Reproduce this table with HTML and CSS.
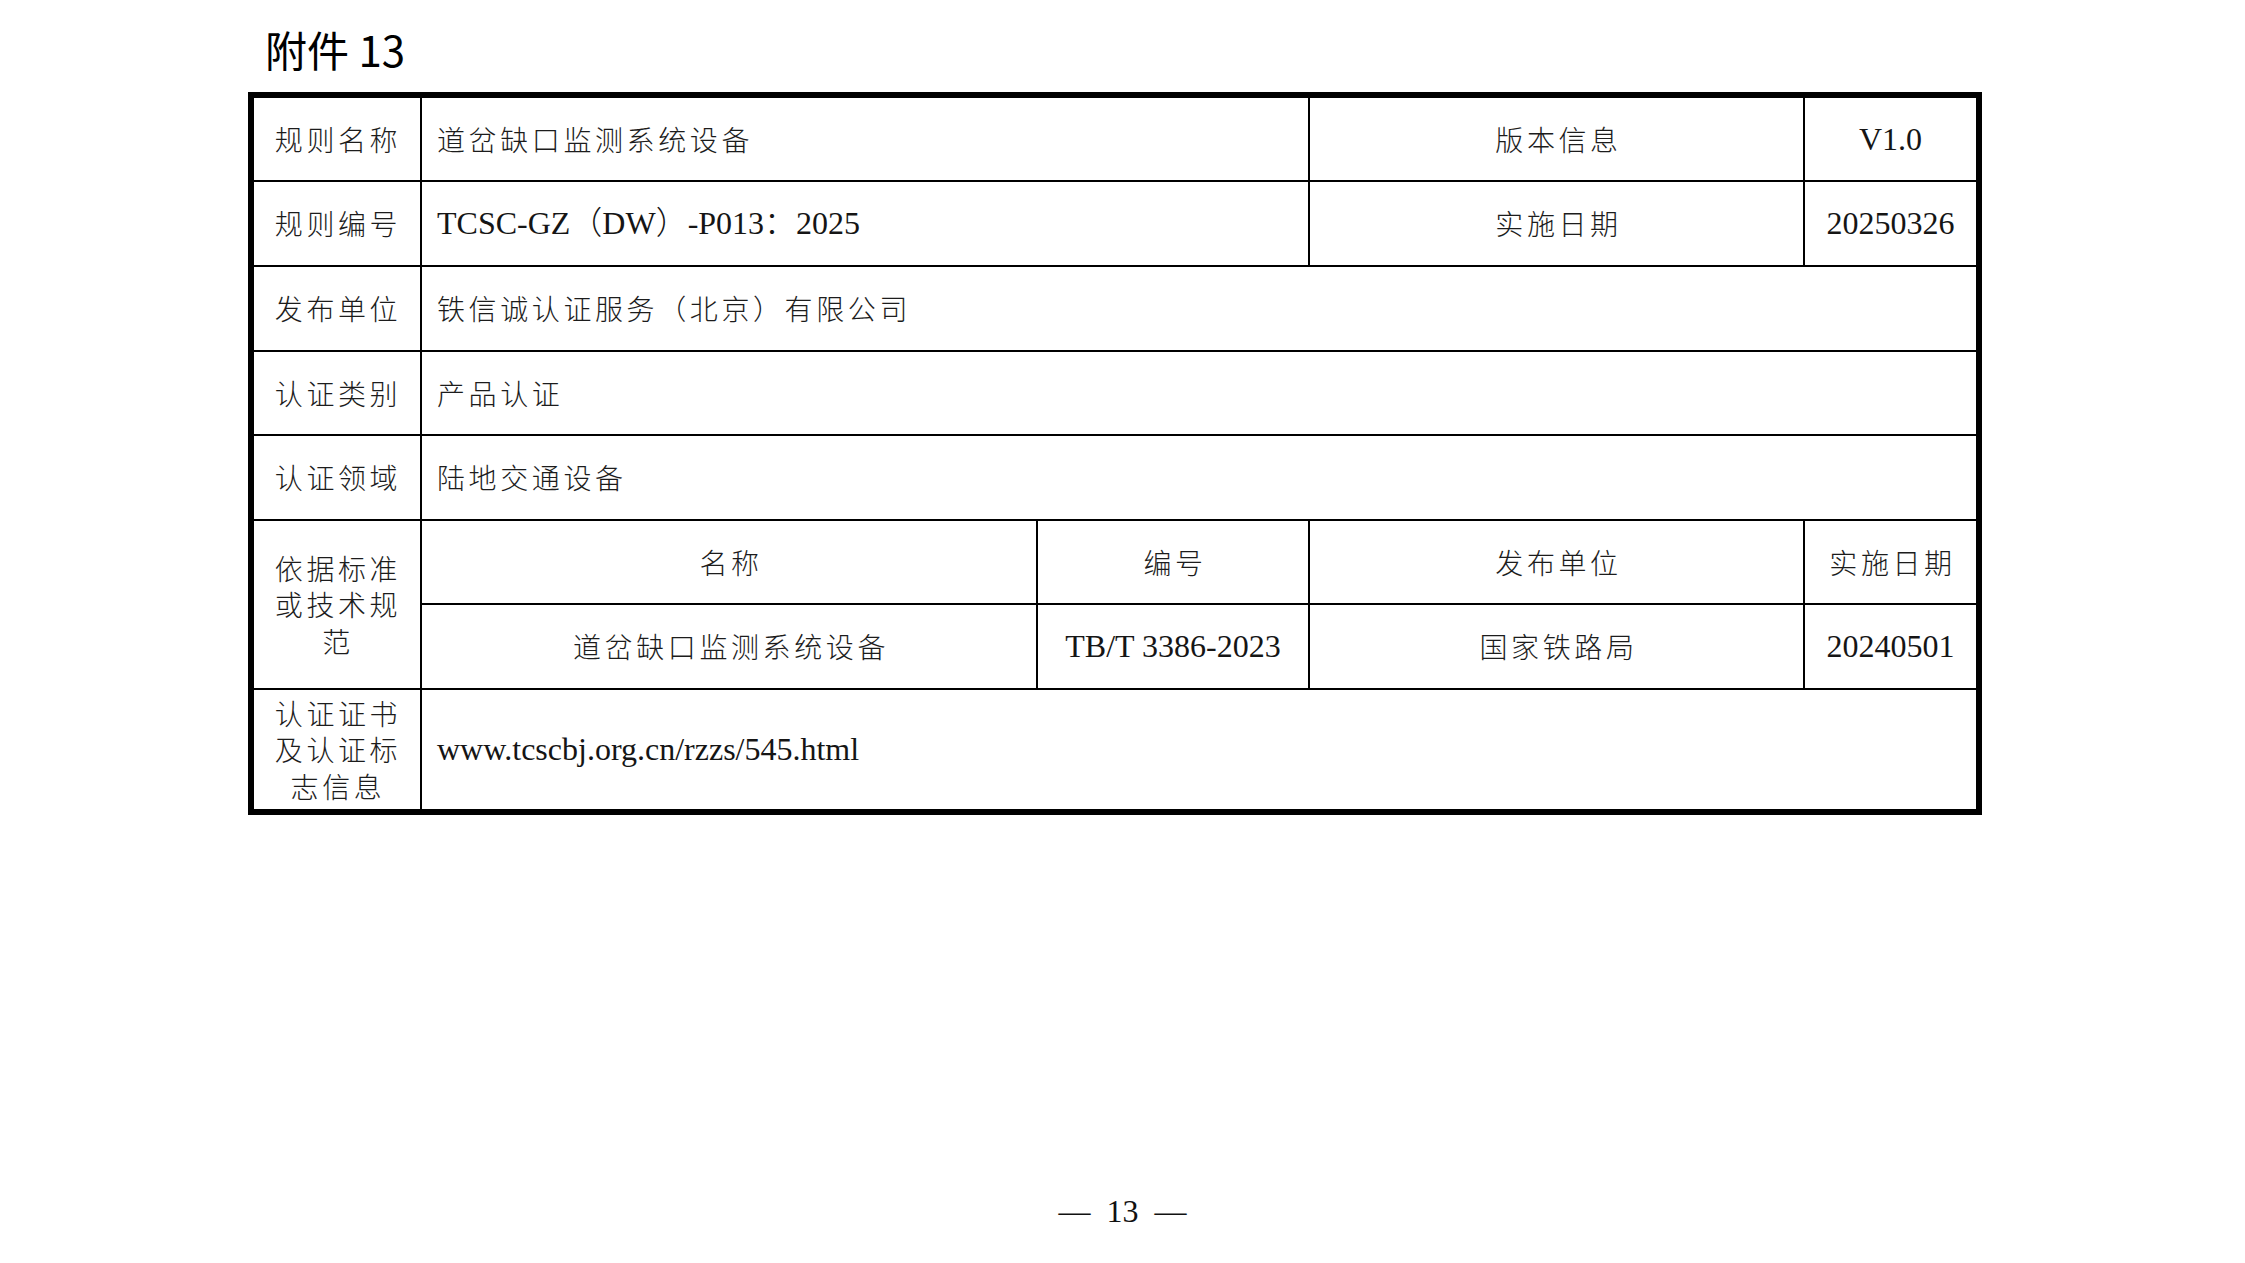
FILE: index.html
```html
<!DOCTYPE html>
<html lang="zh-CN">
<head>
<meta charset="utf-8">
<title>附件 13</title>
<link rel="stylesheet" href="styles.css">
</head>
<body>
<div class="page">
  <div class="title">附件 13</div>
  <div class="sheet">
    <div class="cell label zh">规则名称</div>
    <div class="cell value span2 zh">道岔缺口监测系统设备</div>
    <div class="cell center zh">版本信息</div>
    <div class="cell center">V1.0</div>

    <div class="cell label zh">规则编号</div>
    <div class="cell value span2">TCSC-GZ（DW）-P013：2025</div>
    <div class="cell center zh">实施日期</div>
    <div class="cell center">20250326</div>

    <div class="cell label zh">发布单位</div>
    <div class="cell value span4 zh">铁信诚认证服务（北京）有限公司</div>

    <div class="cell label zh">认证类别</div>
    <div class="cell value span4 zh">产品认证</div>

    <div class="cell label zh">认证领域</div>
    <div class="cell value span4 zh">陆地交通设备</div>

    <div class="cell label tall zh">依据标准<br>或技术规<br>范</div>
    <div class="cell center zh">名称</div>
    <div class="cell center zh">编号</div>
    <div class="cell center zh">发布单位</div>
    <div class="cell center zh">实施日期</div>
    <div class="cell center zh">道岔缺口监测系统设备</div>
    <div class="cell center">TB/T 3386-2023</div>
    <div class="cell center zh">国家铁路局</div>
    <div class="cell center">20240501</div>

    <div class="cell label zh">认证证书<br>及认证标<br>志信息</div>
    <div class="cell value span4">www.tcscbj.org.cn/rzzs/545.html</div>
  </div>
  <div class="pageno">—&nbsp;&nbsp;13&nbsp;&nbsp;—</div>
</div>
</body>
</html>
```

FILE: styles.css
```css
html, body {
  margin: 0;
  padding: 0;
  background: #ffffff;
}

.page {
  width: 2245px;
  height: 1263px;
  display: flex;
  flex-direction: column;
  box-sizing: border-box;
  padding-top: 27px;
  color: #151515;
}

.title {
  margin-left: 265px;
  font-family: "Noto Sans CJK SC", "Liberation Sans", sans-serif;
  font-size: 42px;
  line-height: 44px;
  height: 44px;
  color: #000;
  margin-bottom: 21px;
}

.sheet {
  margin-left: 248px;
  width: 1734px;
  box-sizing: border-box;
  border: 6px solid #000;
  background: #000;
  display: grid;
  grid-template-columns: 166px 614px 270px 493px 171px;
  grid-template-rows: 82px 83px 83px 82px 83px 82px 83px 119px;
  gap: 2px;
  font-family: "Liberation Serif", "Noto Sans CJK SC", serif;
  font-size: 32px;
}

.cell {
  background: #fff;
  display: flex;
  align-items: center;
  line-height: 36.5px;
  font-weight: 300;
}

.zh {
  font-family: "Noto Sans CJK SC", "Liberation Serif", sans-serif;
  font-size: 28px;
  letter-spacing: 3.6px;
  font-weight: 300;
  color: #1c1c1c;
}

.label {
  justify-content: center;
  text-align: center;
  padding-left: 2px;
}

.tall {
  grid-row: span 2;
}

.value {
  justify-content: flex-start;
  padding-left: 15px;
}

.center {
  justify-content: center;
  text-align: center;
}

.zh.center {
  padding-left: 4px;
}

.span2 {
  grid-column: span 2;
}

.span4 {
  grid-column: span 4;
}

.pageno {
  margin-top: 376px;
  align-self: center;
  font-family: "Liberation Serif", serif;
  font-size: 32px;
  line-height: 40px;
  color: #111;
}
```
